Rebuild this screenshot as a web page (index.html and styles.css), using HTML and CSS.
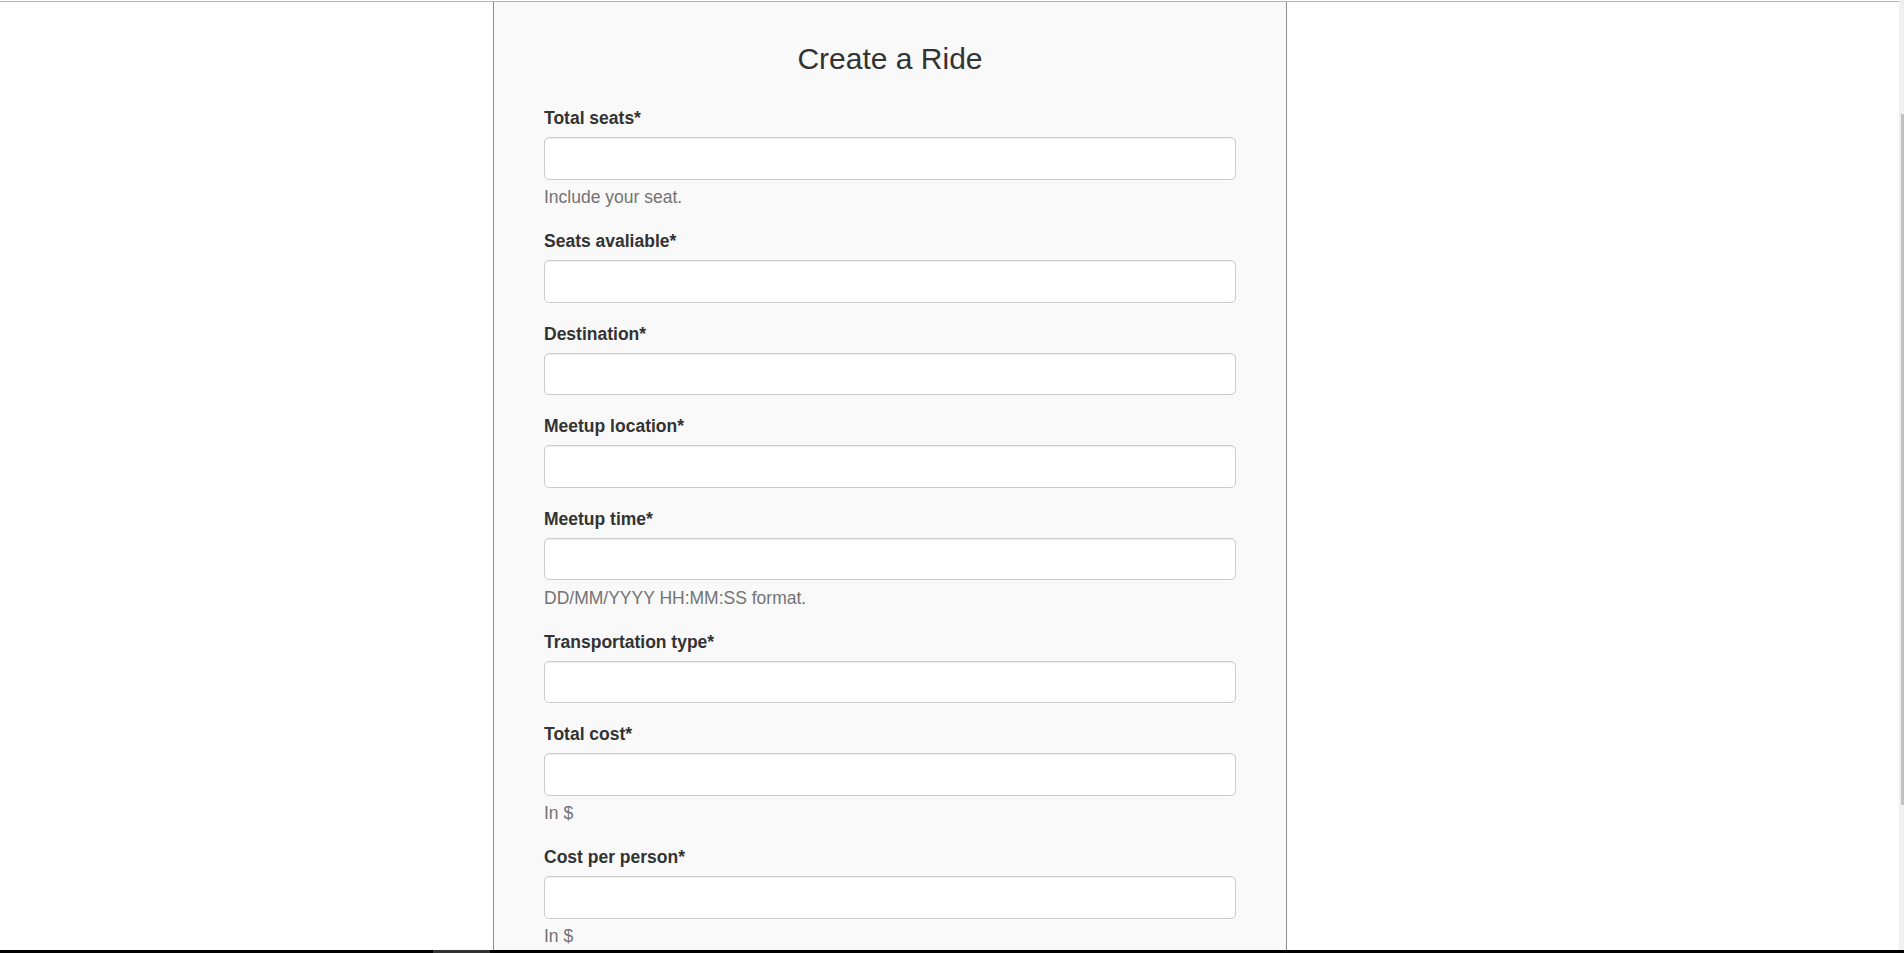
FILE: index.html
```html
<!DOCTYPE html>
<html lang="en">
<head>
<meta charset="utf-8">
<title>Create a Ride</title>
<link rel="stylesheet" href="styles.css">
</head>
<body>
<div class="topline"></div>
<main class="page">
  <section class="panel">
    <h3 class="title">Create a Ride</h3>
    <form class="ride-form">
      <div class="form-group">
        <label class="field-label">Total seats*</label>
        <input class="form-control" type="text">
        <p class="help">Include your seat.</p>
      </div>
      <div class="form-group">
        <label class="field-label">Seats avaliable*</label>
        <input class="form-control" type="text">
      </div>
      <div class="form-group">
        <label class="field-label">Destination*</label>
        <input class="form-control" type="text">
      </div>
      <div class="form-group">
        <label class="field-label">Meetup location*</label>
        <input class="form-control" type="text">
      </div>
      <div class="form-group">
        <label class="field-label">Meetup time*</label>
        <input class="form-control" type="text">
        <p class="help">DD/MM/YYYY HH:MM:SS format.</p>
      </div>
      <div class="form-group">
        <label class="field-label">Transportation type*</label>
        <input class="form-control" type="text">
      </div>
      <div class="form-group">
        <label class="field-label">Total cost*</label>
        <input class="form-control" type="text">
        <p class="help">In $</p>
      </div>
      <div class="form-group">
        <label class="field-label">Cost per person*</label>
        <input class="form-control" type="text">
        <p class="help">In $</p>
      </div>
    </form>
  </section>
</main>
<div class="scrollbar"><div class="thumb"></div></div>
<div class="taskbar"><span class="peek"></span></div>
</body>
</html>
```

FILE: styles.css
```css
html, body {
  margin: 0;
  height: 100%;
  overflow: hidden;
  background: #ffffff;
}

body {
  font-family: "Liberation Sans", Arial, sans-serif;
  font-size: 17.5px;
  line-height: 25px;
  color: #333333;
}

.topline {
  height: 1px;
  margin-top: 1px;
  background: #b3b3b3;
}

.page {
  display: flex;
  padding-left: 493px;
}

.panel {
  width: 692px;
  padding: 0 50px;
  min-height: 1400px;
  background: #f9f9f9;
  border-left: 1px solid #8c8c8c;
  border-right: 1px solid #8c8c8c;
}

.title {
  margin: 0 0 31px;
  padding-top: 40px;
  font-size: 30px;
  font-weight: 500;
  line-height: 33px;
  text-align: center;
  color: #333333;
}

.ride-form {
  display: flex;
  flex-direction: column;
  gap: 18.75px;
}

.form-group {
  display: flex;
  flex-direction: column;
}

.field-label {
  display: block;
  margin-bottom: 6.25px;
  font-weight: bold;
}

.form-control {
  display: block;
  box-sizing: border-box;
  width: 100%;
  height: 42.5px;
  margin: 0;
  padding: 7.5px 15px;
  font: inherit;
  color: #555555;
  background: #ffffff;
  border: 1px solid #cccccc;
  border-radius: 5px;
  box-shadow: inset 0 1px 1px rgba(0, 0, 0, 0.075);
}

.help {
  margin: 5.5px 0 0;
  color: #737373;
}

.scrollbar {
  position: fixed;
  top: 0;
  right: 0;
  width: 5px;
  height: 100%;
  background: #f0f0f0;
}

.thumb {
  position: absolute;
  top: 114px;
  right: 0;
  width: 3px;
  height: 691px;
  background: #c1c1c1;
}

.taskbar {
  position: fixed;
  left: 0;
  bottom: 0;
  width: 100%;
  height: 3px;
  background: #000000;
}

.peek {
  position: absolute;
  left: 433px;
  top: 0;
  width: 57px;
  height: 3px;
  background: #333333;
}
```
